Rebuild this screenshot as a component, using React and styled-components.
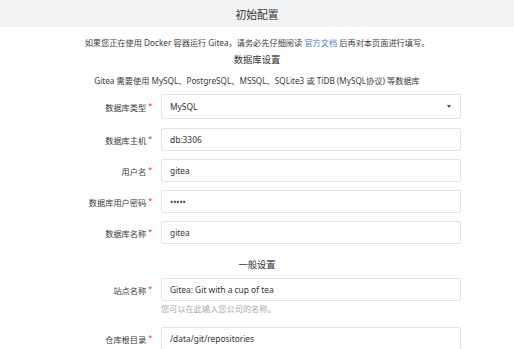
import React from "react";
import styled, { createGlobalStyle } from "styled-components";

const GlobalStyle = createGlobalStyle`
  body {
    margin: 0;
    background: #fff;
    font-family: "Noto Sans", "Noto Sans CJK SC", sans-serif;
    color: #333;
  }
`;

const Page = styled.div`
  width: 514px;
  height: 349px;
  overflow: hidden;
`;

const Header = styled.header`
  height: 27px;
  background-color: #f2f3f4;
  display: flex;
  align-items: center;
  justify-content: center;
  font-size: 10.8px;
  color: #333;
`;

const Body = styled.main`
  padding-top: 10px;
  display: flex;
  flex-direction: column;
  align-items: stretch;
`;

const Note = styled.p`
  margin: 0;
  margin-top: ${({ $top }) => $top || 0}px;
  font-size: 8.2px;
  line-height: 12px;
  text-align: center;
  color: #3a3a3a;
  white-space: nowrap;
`;

const DocLink = styled.a`
  color: #4183c4;
  text-decoration: none;
`;

const SectionTitle = styled.h4`
  margin: 0;
  margin-top: ${({ $top }) => $top || 0}px;
  font-size: 9.3px;
  line-height: 12px;
  font-weight: normal;
  text-align: center;
  color: #333;
`;

const Field = styled.div`
  display: flex;
  align-items: center;
  gap: 9px;
  margin-top: ${({ $top }) => $top || 0}px;
`;

const Label = styled.label`
  width: 152px;
  text-align: right;
  font-size: 8.2px;
  color: #3a3a3a;
  white-space: nowrap;

  &::after {
    content: "*";
    color: #db2828;
    font-size: 7px;
    margin-left: 2px;
    vertical-align: 3px;
  }
`;

const Input = styled.input`
  box-sizing: border-box;
  width: 300px;
  height: 23px;
  padding: 0 8px;
  border: 1px solid #e2e3e4;
  border-radius: 2px;
  background: #fff;
  font-family: inherit;
  font-size: 8.4px;
  color: #333;
  outline: none;
`;

const Select = styled.div`
  box-sizing: border-box;
  width: 300px;
  height: 25px;
  padding: 0 8px;
  border: 1px solid #e2e3e4;
  border-radius: 2px;
  display: flex;
  align-items: center;
  justify-content: space-between;
  font-size: 8.4px;
  color: #333;

  &::after {
    content: "";
    border-left: 2.5px solid transparent;
    border-right: 2.5px solid transparent;
    border-top: 3px solid #444;
    margin-right: 1px;
  }
`;

const Help = styled.div`
  margin-left: 161px;
  margin-top: 2px;
  font-size: 8.2px;
  line-height: 12px;
  color: #aaa;
`;

export default function App() {
  return (
    <>
      <GlobalStyle />
      <Page>
        <Header>初始配置</Header>
        <Body>
          <Note>
            如果您正在使用 Docker 容器运行 Gitea，请务必先仔细阅读{" "}
            <DocLink href="#">官方文档</DocLink> 后再对本页面进行填写。
          </Note>
          <SectionTitle $top={5}>数据库设置</SectionTitle>
          <Note $top={9}>
            Gitea 需要使用 MySQL、PostgreSQL、MSSQL、SQLite3 或 TiDB (MySQL协议) 等数据库
          </Note>
          <Field $top={7}>
            <Label>数据库类型</Label>
            <Select>MySQL</Select>
          </Field>
          <Field $top={9}>
            <Label>数据库主机</Label>
            <Input readOnly defaultValue="db:3306" />
          </Field>
          <Field $top={8}>
            <Label>用户名</Label>
            <Input readOnly defaultValue="gitea" />
          </Field>
          <Field $top={8}>
            <Label>数据库用户密码</Label>
            <Input readOnly type="password" defaultValue="gitea" />
          </Field>
          <Field $top={8}>
            <Label>数据库名称</Label>
            <Input readOnly defaultValue="gitea" />
          </Field>
          <SectionTitle $top={15}>一般设置</SectionTitle>
          <Field $top={7}>
            <Label>站点名称</Label>
            <Input readOnly defaultValue="Gitea: Git with a cup of tea" />
          </Field>
          <Help>您可以在此输入您公司的名称。</Help>
          <Field $top={12}>
            <Label>仓库根目录</Label>
            <Input readOnly defaultValue="/data/git/repositories" />
          </Field>
        </Body>
      </Page>
    </>
  );
}
